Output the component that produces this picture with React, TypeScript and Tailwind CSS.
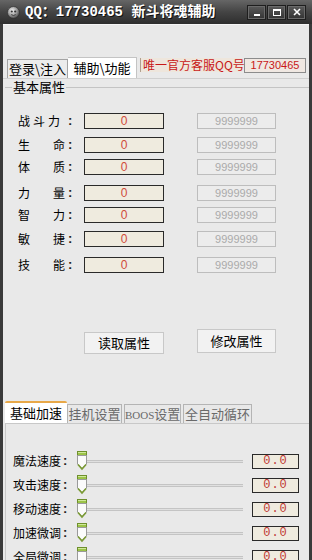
import React from 'react';

const attrRows = [
  { chars: ['战', '斗', '力'], mt: 'mt-[19px]' },
  { chars: ['生', '命'], mt: 'mt-[8px]' },
  { chars: ['体', '质'], mt: 'mt-[6px]' },
  { chars: ['力', '量'], mt: 'mt-[10px]' },
  { chars: ['智', '力'], mt: 'mt-[6px]' },
  { chars: ['敏', '捷'], mt: 'mt-[8px]' },
  { chars: ['技', '能'], mt: 'mt-[10px]' },
];

const speedRows = ['魔法速度', '攻击速度', '移动速度', '加速微调', '全局微调'];

const cjk = "font-['Noto_Sans_CJK_SC',sans-serif]";

const Thumb: React.FC = () => (
  <svg width="10" height="20" viewBox="0 0 10 20" className="shrink-0">
    <rect x="0.5" y="0.5" width="9" height="4" fill="#9cc448" stroke="#6e8f2c" />
    <rect x="1" y="1" width="8" height="1" fill="#cfe89a" />
    <path d="M0.5 4.5 H9.5 V13 L5 17.5 L0.5 13 Z" fill="#fbfbfb" stroke="#9a9a9a" />
    <path d="M1 13.5 L5 18 L9 13.5" fill="none" stroke="#7a9a34" strokeWidth="1.6" />
  </svg>
);

const App: React.FC = () => {
  return (
    <div className={`w-[312px] h-[560px] overflow-hidden bg-[#3a3a3a] flex flex-col ${cjk}`}>
      {/* Title bar */}
      <div className="h-[24px] shrink-0 flex items-center bg-gradient-to-b from-[#666666] via-[#444444] to-[#2e2e2e] pl-[7px] pr-[6px]">
        <svg width="13" height="13" viewBox="0 0 13 13">
          <defs>
            <radialGradient id="ball" cx="40%" cy="35%" r="65%">
              <stop offset="0%" stopColor="#f4f4f4" />
              <stop offset="60%" stopColor="#9a9a9a" />
              <stop offset="100%" stopColor="#4a4a4a" />
            </radialGradient>
          </defs>
          <circle cx="6.5" cy="6.5" r="6" fill="url(#ball)" stroke="#2a2a2a" strokeWidth="0.6" />
          <circle cx="4.8" cy="5.5" r="1.1" fill="#333" />
          <circle cx="8.2" cy="5.5" r="1.1" fill="#333" />
          <path d="M4.2 8.6 Q6.5 10.4 8.8 8.6" fill="none" stroke="#333" strokeWidth="0.9" />
        </svg>
        <span className="ml-[5px] text-white font-bold text-[14px] leading-[16px] whitespace-nowrap font-['Liberation_Mono','Noto_Sans_CJK_SC',monospace] [text-shadow:1px_1px_0_#111]">
          QQ：17730465 新斗将魂辅助
        </span>
        <div className="ml-auto flex gap-[1px]">
          <div className="w-[19px] h-[15px] border border-[#1e1e1e] bg-gradient-to-b from-[#5a5a5a] to-[#333] shadow-[inset_0_0_0_1px_#6a6a6a] flex items-end justify-center pb-[3px]">
            <div className="w-[6px] h-[2px] bg-white" />
          </div>
          <div className="w-[19px] h-[15px] border border-[#1e1e1e] bg-gradient-to-b from-[#5a5a5a] to-[#333] shadow-[inset_0_0_0_1px_#6a6a6a] flex items-center justify-center">
            <div className="w-[8px] h-[7px] border border-white border-t-2" />
          </div>
          <div className="w-[19px] h-[15px] border border-[#1e1e1e] bg-gradient-to-b from-[#5a5a5a] to-[#333] shadow-[inset_0_0_0_1px_#6a6a6a] flex items-center justify-center">
            <svg width="8" height="8" viewBox="0 0 8 8">
              <path d="M1 1 L7 7 M7 1 L1 7" stroke="white" strokeWidth="1.6" />
            </svg>
          </div>
        </div>
      </div>

      {/* Client area */}
      <div className="flex-1 mx-[3px] bg-[#e9e9e9] border-t border-[#f6f6f6] flex flex-col">
        {/* Top tabs */}
        <div className="mt-[32px] h-[21px] flex items-end pl-[4px]">
          <div className="w-[61px] h-[19px] border border-b-0 border-[#a4a4a4] bg-[#ececec] text-[13px] leading-[18px] text-black text-center">
            {'登录\\注入'}
          </div>
          <div className="w-[69px] h-[21px] bg-white border-t border-r border-[#c4c4c4] text-[13px] leading-[20px] text-black text-center">
            {'辅助\\功能'}
          </div>
          <div className="self-start mt-[1px] ml-[3px] w-[102px] h-[14px] bg-[#eee6dc] border-l border-[#b0a090] text-[#c81818] text-[12px] leading-[14px] pl-[2px] whitespace-nowrap">
            唯一官方客服QQ号
          </div>
          <div className="self-start mt-[1px] ml-[2px] w-[62px] h-[15px] border border-[#8c8c8c] bg-[#f0e8e2] text-[#c81818] text-[11px] leading-[13px] text-center font-['Liberation_Sans',sans-serif]">
            17730465
          </div>
        </div>
        <div className="h-px bg-[#d0d0d0]" />

        {/* Group: 基本属性 */}
        <div className="mt-[1px] h-[14px] flex items-center">
          <div className="ml-[2px] w-[7px] h-px bg-[#c4c4c4]" />
          <span className="px-[1px] text-[13px] leading-[14px] text-black">基本属性</span>
          <div className="flex-1 h-px bg-[#c4c4c4]" />
        </div>

        {attrRows.map((row, i) => (
          <div key={i} className={`${row.mt} h-[16px] flex items-center pl-[15px]`}>
            <div className={`w-[50px] flex ${row.chars.length === 3 ? 'gap-[3px]' : 'justify-between pr-[3px]'} text-[12px] leading-[14px] text-black`}>
              {row.chars.map((c, j) => (
                <span key={j}>{c}</span>
              ))}
            </div>
            <span className="w-[16px] text-[13px] font-bold leading-[14px] text-[#222] font-['Liberation_Sans',sans-serif]">:</span>
            <div className="w-[80px] h-[16px] border border-[#2a2a2a] bg-[#efebdf] text-[#d04a3a] text-[12px] leading-[14px] text-center font-['Liberation_Sans',sans-serif]">
              0
            </div>
            <div className="ml-[33px] w-[79px] h-[16px] border border-[#bdbdbd] bg-[#ececec] text-[#aaaaaa] text-[11px] leading-[14px] text-center font-['Liberation_Sans',sans-serif]">
              9999999
            </div>
          </div>
        ))}

        {/* Buttons */}
        <div className="mt-[56px] flex items-start">
          <button className="ml-[81px] mt-[3px] w-[80px] h-[22px] border border-[#c8c8c8] bg-[#f2f2f2] text-[13px] leading-[20px] text-black">
            读取属性
          </button>
          <button className="ml-[33px] w-[79px] h-[24px] border border-[#c8c8c8] bg-[#f2f2f2] text-[13px] leading-[20px] text-black">
            修改属性
          </button>
        </div>

        {/* Lower tabs */}
        <div className="mt-[47px] h-[22px] flex items-end pl-[2px]">
          <div className="w-[62px] h-[22px] bg-white border-t-2 border-[#e8a848] rounded-t-[2px] text-[13px] leading-[19px] text-black text-center">
            基础加速
          </div>
          <div className="w-[55px] h-[19px] border border-b-0 border-[#b4b4b4] bg-[#e8e8e8] text-[13px] leading-[18px] text-[#6a6a6a] text-center">
            挂机设置
          </div>
          <div className="ml-[2px] w-[57px] h-[19px] border border-b-0 border-[#b4b4b4] bg-[#e8e8e8] text-[13px] leading-[18px] text-[#6a6a6a] text-center whitespace-nowrap">
            <span className="font-['Liberation_Serif',serif] text-[11px]">BOOS</span>设置
          </div>
          <div className="ml-[2px] w-[69px] h-[19px] border border-b-0 border-[#b4b4b4] bg-[#e8e8e8] text-[13px] leading-[18px] text-[#6a6a6a] text-center">
            全自动循环
          </div>
        </div>
        <div className="flex-1 ml-[2px] border-t border-l border-[#c8c8c8] bg-[#e9e9e9] flex flex-col pt-[27px] gap-[4px]">
          {speedRows.map((label) => (
            <div key={label} className="h-[20px] flex items-center pl-[7px] shrink-0">
              <span className="w-[50px] text-[12px] leading-[14px] text-black whitespace-nowrap">{label}</span>
              <span className="w-[14px] text-[13px] font-bold leading-[14px] text-[#222] font-['Liberation_Sans',sans-serif]">:</span>
              <Thumb />
              <div className="w-[156px] h-[3px] border-t border-b border-[#c4c4c4] bg-[#e0e0e0]" />
              <div className="ml-[9px] w-[47px] h-[15px] border border-[#2a2a2a] bg-[#efebdf] text-[#c03a34] text-[12px] leading-[13px] text-center tracking-[1px] font-['Liberation_Mono',monospace]">
                0.0
              </div>
            </div>
          ))}
        </div>
      </div>
    </div>
  );
};

export default App;
